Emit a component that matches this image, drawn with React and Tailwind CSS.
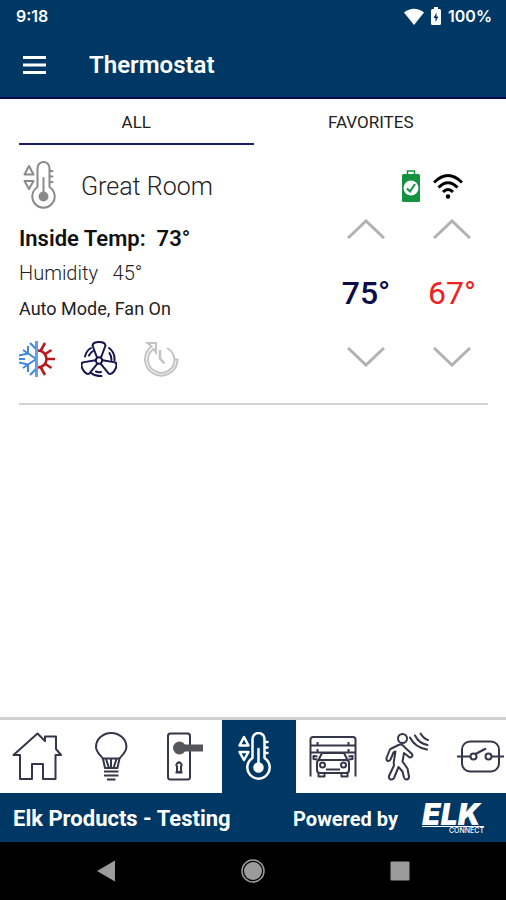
import { useState } from 'react';

// Thermometer with up / down arrows, shared by the zone card and the bottom bar
function ThermostatIcon({ className }) {
    return (
        <svg viewBox="0 0 50 50" className={className} fill="none" stroke="currentColor" strokeLinejoin="round" strokeLinecap="round">
            <path d="M18.500 26V7a6 6 0 0 1 12 0v19a11.200 11.200 0 1 1-12 0z" />
            <path d="M31 10h2.500M31 15.500h2.500M31 21h2.500" />
            <path d="M10 5l4.500 8.500h-9zM10 28l4.500-8h-9z" />
            <path d="M24.500 17v18" />
            <circle cx="24.500" cy="35.500" r="4" fill="currentColor" />
        </svg>
    );
}

function HomeIcon({ className }) {
    return (
        <svg viewBox="0 0 50 50" className={className} fill="none" stroke="currentColor" strokeLinejoin="round">
            <path d="M25.500 1.500L33 9V4.500h11V17l5 6H43.500v24H31V32H20v15H8V23H1.500z" />
        </svg>
    );
}

function LightIcon({ className }) {
    return (
        <svg viewBox="0 0 50 50" className={className} fill="none" stroke="currentColor" strokeLinejoin="round">
            <path d="M17 27c-1-3-7-6-7-12a15.200 14 0 0 1 30.400 0c0 6-6 9-7 12l-2 9H19z" />
            <path d="M16.500 26.500h17.500M20 27l3 9M25 27v9M30.500 27l-3 9" />
            <path d="M18 39.500h14.500M18 43.500h14.500M21 47.500h8.500" />
        </svg>
    );
}

function LockIcon({ className }) {
    return (
        <svg viewBox="0 0 50 50" className={className} fill="none" stroke="currentColor">
            <rect x="8" y="1.500" width="22" height="46" rx="2.500" />
            <circle cx="19.500" cy="16" r="5.500" fill="#55565c" stroke="#55565c" />
            <path d="M20 13.500h22v5H20z" fill="#55565c" stroke="#55565c" />
            <path d="M17 40v-5.500a2.500 2.500 0 1 1 4 0V40zM15.500 40.500h7" />
        </svg>
    );
}

function GarageIcon({ className }) {
    return (
        <svg viewBox="0 0 50 50" className={className} fill="none" stroke="currentColor" strokeLinejoin="round">
            <path d="M2.500 44.500V7.500a2.500 2.500 0 0 1 2.500-2.500h40a2.500 2.500 0 0 1 2.500 2.500v37" />
            <path d="M3 13.500h44M3 20.500h44M9.500 10v3M40.500 10v3M9.500 17v3M40.500 17v3" />
            <path d="M10.500 28l3.500-7h22l3.500 7M13 28h24" />
            <rect x="9" y="28" width="32" height="13" rx="3" />
            <path d="M9.500 27.500l-4-.5v-3l4 .5M40.500 27.500l4-.5v-3l-4 .5M10.500 41v3.500h6V41M33.500 41v3.500h6V41M18 37.500h14" />
            <circle cx="14.500" cy="33" r="2.500" />
            <circle cx="35.500" cy="33" r="2.500" />
        </svg>
    );
}

function MotionIcon({ className }) {
    return (
        <svg viewBox="0 0 50 50" className={className} fill="none" stroke="currentColor" strokeLinejoin="round" strokeLinecap="round">
            <circle cx="20.500" cy="6.500" r="4.500" />
            <path d="M16.500 13L9.500 16.500q-1.500.5-2 2L4.500 26q-.5 2.500 1.500 3 2 0 2.500-1.500l3-7 2-1-1.500 9q-.5 3 0 5L7 44q-.5 3 1.500 3.500 2.500 .5 3.500-1.500L16.500 35l4 4.500L22 45.500q1 2.500 3 2t2-3L25.500 36.500 20.500 29.500l1.500-8.500 5 4q2 1 3-.5t-.5-3L24 16.500 21 13.500q-2-1.500-4.500-.5z" />
            <path d="M28 5.500q5 10 17 12M33 3.500q4 8 12.500 9.500M38.500 1.500q3 5 7.500 6.500" />
        </svg>
    );
}

function OutputIcon({ className }) {
    return (
        <svg viewBox="0 0 50 50" className={className} fill="none" stroke="currentColor">
            <rect x="6" y="9.500" width="37" height="30" rx="8" />
            <circle cx="17.500" cy="24.500" r="3" />
            <circle cx="32.500" cy="24.500" r="3" />
            <path d="M1 24.500h13.500M35.500 24.500H48M19.500 22L30 16.500" />
        </svg>
    );
}

// Half snowflake, half sun: automatic heat / cool mode
function AutoModeIcon({ className }) {
    return (
        <svg viewBox="0 0 36 36" className={className} fill="none">
            <g stroke="#b51a1e" strokeWidth="2.600">
                <path d="M19 9.500a8.500 8.500 0 0 1 0 17" />
                <path d="M21.500 10l4.500-8M25.500 13.500l7-4.500M27 18h9M25.500 22.500l7 4.500M21.500 26l4.500 8" />
            </g>
            <g stroke="#3f86dc" strokeWidth="2">
                <path d="M17.500 0v36" stroke="#6a9fe8" strokeWidth="3" />
                <path d="M16.500 17.500L4 9M16.500 18.500L4 27M11 2l5.500 5.500M11 34l5.500-5.500" />
                <path d="M0 14.500l9-2V5M0 21.500l9 2V31M0 18h6" />
            </g>
        </svg>
    );
}

function FanIcon({ className }) {
    return (
        <svg viewBox="0 0 36 36" className={className} fill="none" stroke="currentColor" strokeLinecap="round" strokeLinejoin="round">
            <circle cx="18" cy="19.500" r="3.200" />
            <path d="M16 16.500L11.500 4.500Q12 1 18 1t6.500 3.500L20 16.500" />
            <path d="M16 16.500L11.500 4.500Q12 1 18 1t6.500 3.500L20 16.500" transform="rotate(120 18 19.500)" />
            <path d="M16 16.500L11.500 4.500Q12 1 18 1t6.500 3.500L20 16.500" transform="rotate(240 18 19.500)" />
            <path d="M4 15.500q1.500-6 6-8.500M8 14.500q1.500-3 4-4.500M28 7q6 4 5.500 12.500M28.500 12q2 3 2 7M10 32q4 3.500 10.500 3M15 30.500q2 1 5 .5" />
        </svg>
    );
}

function TimerIcon({ className }) {
    return (
        <svg viewBox="0 0 36 36" className={className} fill="none" stroke="currentColor" strokeWidth="2">
            <path d="M8.500 5.500A16.200 16.200 0 1 0 34.500 18.500h-3A13.200 13.200 0 1 1 10.500 8l2.500 3.500V2H4.500z" />
            <path d="M24 7q7 4 7.500 11.500" />
            <path d="M17 9v8.500l4.500 5" strokeWidth="2.500" />
        </svg>
    );
}

function Chevron({ down }) {
    return (
        <svg viewBox="0 0 38 20" className="w-[38px] h-5" fill="none" stroke="#b2b2b2" strokeWidth="3">
            <path d={down ? 'M1 1l18 17L37 1' : 'M1 19L19 2l18 17'} />
        </svg>
    );
}

// Up / down control for one set point
function SetPoint({ label, start, valueClass }) {
    const [value, setValue] = useState(start);

    return (
        <div className="flex flex-col items-center gap-9 w-[72px]">
            <button aria-label={`Raise ${label}`} onClick={() => setValue(value + 1)}>
                <Chevron />
            </button>
            <span className={valueClass}>{value}°</span>
            <button aria-label={`Lower ${label}`} onClick={() => setValue(value - 1)}>
                <Chevron down />
            </button>
        </div>
    );
}

const sections = [
    { name: 'Home', Icon: HomeIcon },
    { name: 'Lights', Icon: LightIcon },
    { name: 'Locks', Icon: LockIcon },
    { name: 'Thermostat', Icon: ThermostatIcon },
    { name: 'Garage', Icon: GarageIcon },
    { name: 'Motion', Icon: MotionIcon },
    { name: 'Outputs', Icon: OutputIcon },
];

export default function App() {
    const [tab, setTab] = useState('ALL');
    const [section, setSection] = useState('Thermostat');

    return (
        <div className="min-h-screen flex flex-col bg-white font-[Roboto,sans-serif] text-[#222]">
            {/* Device status bar */}
            <div className="h-8 bg-[#003865] text-white flex items-center justify-between pl-4 pr-3.5 font-[Inter,sans-serif] text-base font-semibold">
                <span>9:18</span>
                <div className="flex items-center gap-1">
                    <svg viewBox="0 0 20 17" className="w-5 h-[17px]" fill="currentColor">
                        <path d="M0 4.500Q10-3 20 4.500L10 17z" />
                    </svg>
                    <svg viewBox="0 0 16 18" className="w-4 h-[18px]">
                        <path d="M3 3.500q0-1.500 1.500-1.500H6V0h4v2h1.500Q13 2 13 3.500v13q0 1.500-1.500 1.500h-7Q3 18 3 16.500z" fill="currentColor" />
                        <path d="M8.500 5.500L5.500 11h2v4l3-5.500h-2z" fill="#003865" />
                    </svg>
                    <span>100%</span>
                </div>
            </div>

            {/* App header */}
            <header className="h-[67px] bg-[#003865] border-b-2 border-[#0a0a50] text-white flex items-center gap-[43px] px-[23px]">
                <button aria-label="Menu" className="flex">
                    <svg viewBox="0 0 23 18" className="w-[23px] h-[18px]" stroke="currentColor" strokeWidth="3">
                        <path d="M0 1.500h23M0 9h23M0 16.500h23" />
                    </svg>
                </button>
                <h1 className="text-2xl font-semibold">Thermostat</h1>
            </header>

            {/* Filter tabs */}
            <div className="flex pl-[19px] pr-[18px]">
                {['ALL', 'FAVORITES'].map((name) => (
                    <button
                        key={name}
                        onClick={() => setTab(name)}
                        className={`flex-1 h-[46px] pt-1 text-[17px] border-b-2 ${tab === name ? 'border-[#1c1c6c]' : 'border-transparent'}`}
                    >
                        {name}
                    </button>
                ))}
            </div>

            {/* Thermostat list */}
            <main className="flex-1 pl-[19px] pr-[18px] pt-4">
                <section className="border-b-2 border-[#d4d4d4] pb-[26px]">
                    <div className="h-[50px] flex items-center pr-[25px]">
                        <ThermostatIcon className="w-[50px] h-[50px] shrink-0 text-[#8a8a8a] stroke-2" />
                        <h2 className="flex-1 pl-3 pt-0.5 text-[25px] font-light">Great Room</h2>
                        <svg viewBox="0 0 20 32" className="w-5 h-8 mr-3">
                            <path d="M6.500 4V1h7v3" fill="none" stroke="#12933f" strokeWidth="1.500" />
                            <rect x="1" y="4" width="18" height="28" rx="1.500" fill="#12933f" />
                            <circle cx="10" cy="18" r="7.500" fill="#fff" />
                            <path d="M6 18.500l3 3 5-7.500" fill="none" stroke="#12933f" strokeWidth="2" />
                        </svg>
                        <svg viewBox="0 0 30 26" className="w-[30px] h-[26px]" fill="none" stroke="#000" strokeWidth="3">
                            <path d="M1 9.500q14-14 28 0M5.500 14.500q9.500-9.500 19 0M10 19q5-5 10 0" />
                            <circle cx="15" cy="23.500" r="2.200" fill="#000" stroke="none" />
                        </svg>
                    </div>

                    <div className="flex pt-2">
                        <div className="flex-1 pt-0.5">
                            <p className="text-[22px] leading-9 font-semibold text-[#111]">Inside Temp:&nbsp; 73°</p>
                            <p className="text-xl leading-8 font-light">Humidity&nbsp;&nbsp; 45°</p>
                            <p className="text-lg leading-10">Auto Mode, Fan On</p>
                            <div className="flex gap-[26px] mt-3">
                                <button aria-label="Mode">
                                    <AutoModeIcon className="w-9 h-9" />
                                </button>
                                <button aria-label="Fan">
                                    <FanIcon className="w-9 h-9 text-[#14144f] stroke-2" />
                                </button>
                                <button aria-label="Hold">
                                    <TimerIcon className="w-9 h-9 text-[#c3c3c3]" />
                                </button>
                            </div>
                        </div>
                        <div className="flex gap-3.5">
                            <SetPoint label="cool set point" start={75} valueClass="text-[32px] leading-9 font-medium text-[#0c0c48]" />
                            <SetPoint label="heat set point" start={67} valueClass="text-[32px] leading-9 text-[#f02020]" />
                        </div>
                    </div>
                </section>
            </main>

            {/* Section bar, cut off at the window edge on narrow screens */}
            <nav className="flex overflow-hidden border-t-[3px] border-[#d0d0d0]">
                {sections.map(({ name, Icon }) => (
                    <button
                        key={name}
                        aria-label={name}
                        onClick={() => setSection(name)}
                        className={`w-[74px] h-[73px] shrink-0 flex items-center justify-center ${section === name ? 'bg-[#003865] text-white stroke-[2.5px]' : 'text-[#34364a] stroke-2'}`}
                    >
                        <Icon className="w-[50px] h-[50px]" />
                    </button>
                ))}
            </nav>

            {/* Site name and branding */}
            <footer className="h-[49px] bg-[#003865] text-white flex items-center pl-[13px] pr-[22px]">
                <span className="flex-1 pt-0.5 text-[22px] font-bold">Elk Products - Testing</span>
                <span className="pt-0.5 text-xl font-bold">Powered by</span>
                <div className="ml-6 w-[62px] flex flex-col font-[Inter,sans-serif]">
                    <span className="text-[30px] leading-6 font-black italic">ELK</span>
                    <span className="border-t border-white text-[7px] leading-[7px] font-medium text-right">CONNECT</span>
                </div>
            </footer>

            {/* Android navigation buttons */}
            <div className="h-[58px] bg-black text-[#9b9b9b] flex items-center justify-around px-[33px]">
                <button aria-label="Back">
                    <svg viewBox="0 0 24 24" className="w-6 h-6" fill="currentColor">
                        <path d="M21 1.500v21L3 12z" />
                    </svg>
                </button>
                <button aria-label="Home screen">
                    <svg viewBox="0 0 24 24" className="w-6 h-6" fill="currentColor">
                        <circle cx="12" cy="12" r="9" />
                        <circle cx="12" cy="12" r="11" fill="none" stroke="currentColor" strokeWidth="1.500" />
                    </svg>
                </button>
                <button aria-label="Recent apps">
                    <svg viewBox="0 0 24 24" className="w-6 h-6" fill="currentColor">
                        <rect x="2.500" y="2.500" width="19" height="19" rx="1" />
                    </svg>
                </button>
            </div>
        </div>
    );
}
